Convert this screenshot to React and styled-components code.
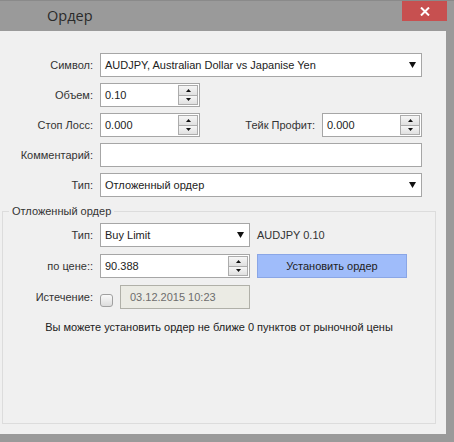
import React from 'react';
import styled, { createGlobalStyle } from 'styled-components';

const GlobalStyle = createGlobalStyle`
  body {
    margin: 0;
    font-family: "Liberation Sans", Arial, sans-serif;
    font-size: 11px;
    color: #222;
  }
`;

const Window = styled.div`
  width: 454px;
  height: 442px;
  background: #9a9a9a;
  display: flex;
  flex-direction: column;
  box-sizing: border-box;
  border-top: 1px solid #8a8a8a;
`;

const TitleBar = styled.div`
  height: 30px;
  display: flex;
  align-items: center;
  padding-left: 47px;
`;

const Title = styled.span`
  font-family: "Open Sans", "Noto Sans", sans-serif;
  font-size: 14.5px;
  color: #2a2a2a;
  margin-top: -1px;
`;

const CloseButton = styled.div`
  margin-left: auto;
  margin-right: 7px;
  align-self: flex-start;
  width: 45px;
  height: 20px;
  background: #c75050;
  display: flex;
  align-items: center;
  justify-content: center;
`;

const Body = styled.div`
  flex: 1;
  margin: 0 8px 8px 0;
  background: #f0f0f0;
  padding: 22px 0 10px 0;
  display: flex;
  flex-direction: column;
`;

const TopGrid = styled.div`
  display: grid;
  grid-template-columns: 93px 322px;
  grid-auto-rows: 24px;
  column-gap: 7px;
  row-gap: 6px;
`;

const Label = styled.label`
  display: flex;
  align-items: center;
  justify-content: flex-end;
  color: #333;
  white-space: nowrap;
`;

const Field = styled.div`
  box-sizing: border-box;
  width: ${p => p.$w}px;
  height: 24px;
  border: 1px solid ${p => (p.$disabled ? '#b0b0a8' : '#a6a6a6')};
  background: ${p => (p.$disabled ? '#ebebe4' : '#fff')};
  color: ${p => (p.$disabled ? '#6d6d6d' : '#222')};
  display: flex;
  align-items: center;
  padding-left: ${p => (p.$pad ?? 4)}px;
`;

const FieldText = styled.span`
  flex: 1;
  white-space: nowrap;
`;

const Arrow = styled.svg`
  margin-right: 5px;
`;

const SpinStack = styled.div`
  display: flex;
  flex-direction: column;
  margin-right: 1px;
  align-self: stretch;
  padding: 1px 0;
`;

const SpinBtn = styled.div`
  box-sizing: border-box;
  width: 20px;
  flex: 1;
  border: 1px solid #acacac;
  background: linear-gradient(#f6f6f6, #e0e0e0);
  display: flex;
  align-items: center;
  justify-content: center;
  & + & {
    margin-top: -1px;
  }
`;

const PairRow = styled.div`
  display: flex;
  align-items: center;
  gap: 7px;
`;

const Spacer = styled.div`
  flex: 1;
  align-self: stretch;
  display: flex;
  align-items: center;
  justify-content: flex-end;
  color: #333;
`;

const Group = styled.fieldset`
  flex: 1;
  margin: 8px 10px 0 2px;
  padding: 6px 0 0 6px;
  border: 1px solid #dcdcdc;
  display: flex;
  flex-direction: column;
  min-width: 0;
`;

const Legend = styled.legend`
  padding: 0 3px;
  color: #333;
`;

const GroupGrid = styled.div`
  display: grid;
  grid-template-columns: 84px 150px 150px;
  grid-auto-rows: 24px;
  column-gap: 7px;
  row-gap: 7px;
`;

const Info = styled.div`
  display: flex;
  align-items: center;
  color: #333;
`;

const OrderButton = styled.div`
  box-sizing: border-box;
  height: 24px;
  background: #9fbcfa;
  border: 1px solid #8aa6e6;
  display: flex;
  align-items: center;
  justify-content: center;
  color: #222;
`;

const ExpiryCell = styled.div`
  grid-column: 2 / 4;
  display: flex;
  align-items: center;
  gap: 7px;
`;

const Checkbox = styled.div`
  box-sizing: border-box;
  width: 13px;
  height: 13px;
  border: 1px solid #a0a0a0;
  border-radius: 3px;
  background: linear-gradient(#fafafa, #dcdcdc);
  margin-top: 6px;
`;

const Note = styled.p`
  margin: 12px 0 0 0;
  text-align: center;
  padding-right: 6px;
  color: #222;
`;

const DownArrow = () => (
  <Arrow width="7" height="6" viewBox="0 0 7 6">
    <polygon points="0,0 7,0 3.5,6" fill="#111" />
  </Arrow>
);

const Tri = ({ up }) => (
  <svg width="5" height="3" viewBox="0 0 5 3">
    <polygon points={up ? '0,3 5,3 2.5,0' : '0,0 5,0 2.5,3'} fill="#111" />
  </svg>
);

const Select = ({ w, children }) => (
  <Field $w={w}>
    <FieldText>{children}</FieldText>
    <DownArrow />
  </Field>
);

const Spin = ({ w, children }) => (
  <Field $w={w}>
    <FieldText>{children}</FieldText>
    <SpinStack>
      <SpinBtn><Tri up /></SpinBtn>
      <SpinBtn><Tri /></SpinBtn>
    </SpinStack>
  </Field>
);

export default function App() {
  return (
    <>
      <GlobalStyle />
      <Window>
        <TitleBar>
          <Title>Ордер</Title>
          <CloseButton>
            <svg width="10" height="9" viewBox="0 0 10 9">
              <path d="M1 0.5 L9 8.5 M9 0.5 L1 8.5" stroke="#fff" strokeWidth="2" />
            </svg>
          </CloseButton>
        </TitleBar>
        <Body>
          <TopGrid>
            <Label>Символ:</Label>
            <Select w={322}>AUDJPY, Australian Dollar vs Japanise Yen</Select>

            <Label>Объем:</Label>
            <Spin w={100}>0.10</Spin>

            <Label>Стоп Лосс:</Label>
            <PairRow>
              <Spin w={100}>0.000</Spin>
              <Spacer>Тейк Профит:</Spacer>
              <Spin w={100}>0.000</Spin>
            </PairRow>

            <Label>Комментарий:</Label>
            <Field $w={322} />

            <Label>Тип:</Label>
            <Select w={322}>Отложенный ордер</Select>
          </TopGrid>

          <Group>
            <Legend>Отложенный ордер</Legend>
            <GroupGrid>
              <Label>Тип:</Label>
              <Select w={150}>Buy Limit</Select>
              <Info>AUDJPY 0.10</Info>

              <Label>по цене::</Label>
              <Spin w={150}>90.388</Spin>
              <OrderButton>Установить ордер</OrderButton>

              <Label>Истечение:</Label>
              <ExpiryCell>
                <Checkbox />
                <Field $w={130} $disabled $pad={9}>
                  <FieldText>03.12.2015 10:23</FieldText>
                </Field>
              </ExpiryCell>
            </GroupGrid>
            <Note>Вы можете установить ордер не ближе 0 пунктов от рыночной цены</Note>
          </Group>
        </Body>
      </Window>
    </>
  );
}
